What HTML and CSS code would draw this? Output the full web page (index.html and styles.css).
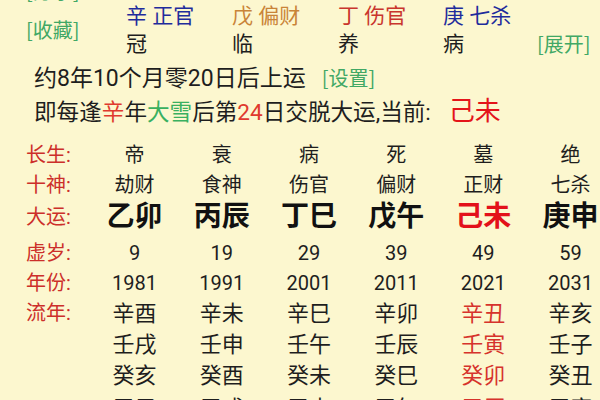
FILE: index.html
```html
<!DOCTYPE html>
<html lang="zh">
<head>
<meta charset="utf-8">
<link rel="stylesheet" href="styles.css">
</head>
<body>
<div class="page">
  <div class="header">
    <div class="links">
      <span class="link">[分享]</span>
      <span class="link">[收藏]</span>
    </div>
    <div class="gods">
      <span class="blue">辛 正官</span>
      <span class="orange">戊 偏财</span>
      <span class="red">丁 伤官</span>
      <span class="blue">庚 七杀</span>
      <span>冠</span>
      <span>临</span>
      <span>养</span>
      <span>病</span>
    </div>
    <div class="expand"><span class="link">[展开]</span></div>
  </div>

  <div class="line l1">约8年10个月零20日后上运<span class="link small">[设置]</span></div>
  <div class="line l2">即每逢<span class="hl-red">辛</span>年<span class="hl-green">大雪</span>后第<span class="hl-red">24</span>日交脱大运,当前:<span class="current">己未</span></div>

  <div class="table">
    <div class="row r-sm">
      <span class="label">长生:</span>
      <span>帝</span><span>衰</span><span>病</span><span>死</span><span>墓</span><span>绝</span>
    </div>
    <div class="row r-sm">
      <span class="label">十神:</span>
      <span>劫财</span><span>食神</span><span>伤官</span><span>偏财</span><span>正财</span><span>七杀</span>
    </div>
    <div class="row r-big">
      <span class="label">大运:</span>
      <span>乙卯</span><span>丙辰</span><span>丁巳</span><span>戊午</span><span class="now">己未</span><span>庚申</span>
    </div>
    <div class="row r-num">
      <span class="label">虚岁:</span>
      <span>9</span><span>19</span><span>29</span><span>39</span><span>49</span><span>59</span>
    </div>
    <div class="row r-num">
      <span class="label">年份:</span>
      <span>1981</span><span>1991</span><span>2001</span><span>2011</span><span>2021</span><span>2031</span>
    </div>
    <div class="row r-yr">
      <span class="label">流年:</span>
      <span>辛酉</span><span>辛未</span><span>辛巳</span><span>辛卯</span><span class="now2">辛丑</span><span>辛亥</span>
    </div>
    <div class="row r-yr">
      <span class="label"></span>
      <span>壬戌</span><span>壬申</span><span>壬午</span><span>壬辰</span><span class="now2">壬寅</span><span>壬子</span>
    </div>
    <div class="row r-yr">
      <span class="label"></span>
      <span>癸亥</span><span>癸酉</span><span>癸未</span><span>癸巳</span><span class="now2">癸卯</span><span>癸丑</span>
    </div>
    <div class="row r-yr">
      <span class="label"></span>
      <span>甲子</span><span>甲戌</span><span>甲申</span><span>甲午</span><span class="now2">甲辰</span><span>甲寅</span>
    </div>
  </div>
</div>
</body>
</html>
```

FILE: styles.css
```css
html, body {
  margin: 0;
  padding: 0;
}
body {
  width: 600px;
  height: 400px;
  overflow: hidden;
  background: #fcf7cf;
  font-family: Roboto, "Noto Sans CJK SC", sans-serif;
  color: #1e1e1e;
}
.page {
  width: 600px;
}
.header {
  display: flex;
  height: 58px;
}
.links {
  width: 100px;
  padding-left: 26px;
  display: flex;
  flex-direction: column;
  margin-top: -29px;
}
.links .link {
  line-height: 39px;
}
.link {
  color: #41a865;
  font-size: 20px;
  font-family: "Noto Sans CJK SC", sans-serif;
}
.gods {
  display: grid;
  grid-template-columns: 106px 106px 105px 94px;
  padding-top: 2px;
  font-size: 21px;
  line-height: 28px;
}
.blue { color: #1f2c9c; }
.orange { color: #c98438; }
.red { color: #c9352c; }
.expand {
  padding-top: 30px;
  line-height: 28px;
}
.line {
  padding-left: 34px;
  line-height: 32px;
  white-space: nowrap;
}
.l1 {
  margin-top: 4px;
  font-size: 23px;
}
.l2 {
  font-size: 22.6px;
}
.line .small {
  font-size: 20px;
  margin-left: 16px;
}
.hl-red { color: #e03a2e; }
.hl-green { color: #39b060; }
.current {
  color: #e4141a;
  font-size: 26px;
  margin-left: 18px;
}
.table {
  margin-top: 11px;
  padding-left: 26px;
}
.row {
  display: grid;
  grid-template-columns: 65px repeat(6, 87.2px);
  align-items: center;
  text-align: center;
}
.row .label {
  text-align: left;
  color: #cc2f2a;
  font-size: 20px;
  font-weight: normal;
}
.r-sm { height: 30px; line-height: 30px; font-size: 20px; }
.r-sm + .r-sm { height: 31px; line-height: 31px; }
.r-big {
  height: 32px;
  line-height: 32px;
  padding-bottom: 5px;
  font-size: 28px;
  font-weight: bold;
  color: #111;
}
.r-num { height: 30px; line-height: 30px; font-size: 20px; }
.r-yr { height: 31px; line-height: 31px; font-size: 22px; }
.r-yr:last-child { padding-top: 2px; }
.now { color: #e3111a; }
.now2 { color: #d6332c; }
```
